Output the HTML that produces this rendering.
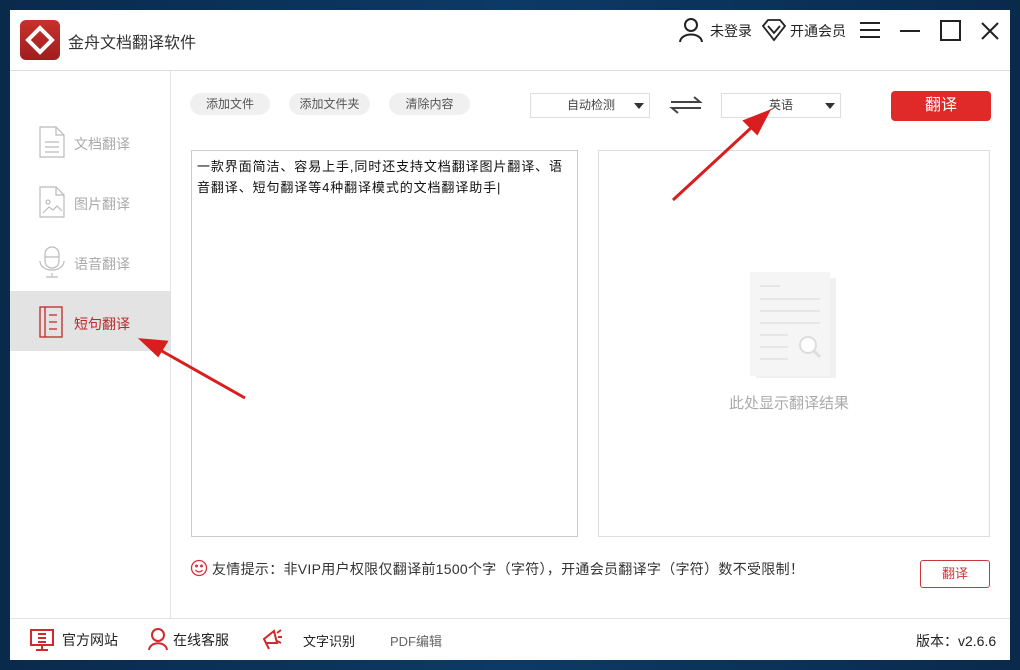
<!DOCTYPE html>
<html><head><meta charset="utf-8"><style>
*{margin:0;padding:0;box-sizing:border-box}
body{width:1020px;height:670px;overflow:hidden;background:linear-gradient(90deg,#0a2a4c,#0c3a66 50%,#0a2a4c);font-family:"Liberation Sans","Noto Sans CJK SC",sans-serif;position:relative}
.win{position:absolute;left:10px;top:10px;width:1000px;height:650px;background:#fff}
.a{position:absolute;white-space:nowrap}
.pill{position:absolute;top:93px;height:22px;background:#f0f0f0;border-radius:11px;font-size:12px;color:#555;text-align:center;line-height:22px}
.dd{position:absolute;top:93px;height:25px;border:1px solid #ddd;font-size:12px;color:#444;line-height:23px}
.dd b{position:absolute;right:5px;top:9px;border-left:5px solid transparent;border-right:5px solid transparent;border-top:6px solid #333}
.nav{position:absolute;left:74px;font-size:14px;color:#aaa}
</style></head><body>
<div class="win"></div>
<div class="a" style="left:20px;top:20px;width:40px;height:40px;background:linear-gradient(#c8312c,#9e1e1e);border-radius:6px"></div>
<svg class="a" style="left:20px;top:20px" width="40" height="40"><g fill="none" stroke="#fff" stroke-width="4"><path d="M20 8 L32 20 L20 32 L8 20 Z"/></g><path d="M15 17 h8 v3 h-6 v3 h8" stroke="#b52525" stroke-width="2.5" fill="none"/></svg>
<div class="a" style="left:68px;top:29px;font-size:16px;color:#333">金舟文档翻译软件</div>
<svg class="a" style="left:678px;top:17px" width="26" height="26" fill="none" stroke="#222" stroke-width="2"><circle cx="13" cy="8" r="6"/><path d="M2 25 C3 15 23 15 24 25"/></svg>
<div class="a" style="left:710px;top:21px;font-size:14px;color:#222">未登录</div>
<svg class="a" style="left:761px;top:18px" width="26" height="24" fill="none" stroke="#222" stroke-width="1.8"><path d="M2 8 L7 2 H19 L24 8 L13 22 Z M7 8 L13 15 L19 8"/></svg>
<div class="a" style="left:790px;top:21px;font-size:14px;color:#222">开通会员</div>
<svg class="a" style="left:858px;top:20px" width="24" height="20" stroke="#222" stroke-width="2"><path d="M2 3h20M2 10h20M2 17h20"/></svg>
<svg class="a" style="left:898px;top:20px" width="24" height="20" stroke="#222" stroke-width="2"><path d="M2 11h20"/></svg>
<svg class="a" style="left:938px;top:19px" width="24" height="24" fill="none" stroke="#222" stroke-width="2"><rect x="3" y="2" width="19" height="19"/></svg>
<svg class="a" style="left:979px;top:20px" width="22" height="22" stroke="#222" stroke-width="2"><path d="M3 3L19 19M19 3L3 19"/></svg>
<div class="a" style="left:10px;top:70px;width:1000px;height:1px;background:#ddd"></div>
<div class="a" style="left:170px;top:71px;width:1px;height:547px;background:#e3e3e3"></div>
<div class="a" style="left:10px;top:291px;width:160px;height:60px;background:#e3e3e3"></div>
<svg class="a" style="left:38px;top:125px" width="28" height="34" fill="none" stroke="#bbb" stroke-width="1.2"><path d="M2 2H18L26 10V32H2Z M18 2V10H26 M7 17h14M7 22h14M7 27h14"/></svg>
<div class="nav" style="top:134px">文档翻译</div>
<svg class="a" style="left:38px;top:185px" width="28" height="34" fill="none" stroke="#bbb" stroke-width="1.2"><path d="M2 2H18L26 10V32H2Z M18 2V10H26 M5 28l6-6 4 3 4-4 5 5"/><circle cx="10" cy="17" r="2"/></svg>
<div class="nav" style="top:194px">图片翻译</div>
<svg class="a" style="left:38px;top:245px" width="28" height="34" fill="none" stroke="#bbb" stroke-width="1.2"><rect x="7" y="2" width="14" height="21" rx="7"/><path d="M7 12h14 M2 16c0 12 24 12 24 0 M14 28v4 M8 32h12"/></svg>
<div class="nav" style="top:254px">语音翻译</div>
<svg class="a" style="left:38px;top:305px" width="28" height="34" fill="none" stroke="#c0282a" stroke-width="1.3"><rect x="2" y="2" width="22" height="30"/><path d="M7 2v30 M11 10h8M11 17h8M11 24h8"/></svg>
<div class="nav" style="top:314px;color:#b52a2a">短句翻译</div>
<div class="pill" style="left:190px;width:80px">添加文件</div>
<div class="pill" style="left:289px;width:81px">添加文件夹</div>
<div class="pill" style="left:389px;width:81px">清除内容</div>
<div class="dd" style="left:530px;width:120px;padding-left:36px">自动检测<b></b></div>
<svg class="a" style="left:669px;top:95px" width="34" height="20" stroke="#444" stroke-width="2" fill="none"><path d="M2 7H31L25 2 M32 13H3L9 18"/></svg>
<div class="dd" style="left:721px;width:120px;padding-left:47px">英语<b></b></div>
<div class="a" style="left:891px;top:91px;width:100px;height:30px;background:#e02a2a;border-radius:4px;color:#fff;font-size:16px;text-align:center;line-height:30px">翻译</div>
<div class="a" style="left:191px;top:150px;width:387px;height:387px;border:1px solid #ccc"></div>
<div class="a" style="left:197px;top:156px;font-size:13px;color:#111;line-height:21px;letter-spacing:0.9px">一款界面简洁、容易上手,同时还支持文档翻译图片翻译、语<br>音翻译、短句翻译等4种翻译模式的文档翻译助手|</div>
<div class="a" style="left:598px;top:150px;width:392px;height:387px;border:1px solid #ddd"></div>
<svg class="a" style="left:750px;top:272px" width="88" height="108"><rect x="6" y="6" width="80" height="100" fill="#f0f0f0"/><rect x="0" y="0" width="80" height="104" fill="#f5f5f5"/><g stroke="#e2e2e2" stroke-width="1.5"><path d="M10 14h20M10 27h60M10 39h60M10 51h60M10 63h28M10 75h28M10 87h28"/></g><circle cx="58" cy="73" r="8" fill="#fff" stroke="#ddd" stroke-width="2"/><path d="M64 79l6 6" stroke="#ddd" stroke-width="3"/></svg>
<div class="a" style="left:729px;top:392px;font-size:15px;color:#aaa">此处显示翻译结果</div>
<svg class="a" style="left:190px;top:559px" width="18" height="18" fill="none" stroke="#d9303a" stroke-width="1.3"><circle cx="9" cy="9" r="7.5"/><circle cx="6.5" cy="7" r=".8" fill="#d9303a"/><circle cx="11.5" cy="7" r=".8" fill="#d9303a"/><path d="M5.5 11c2 2.5 5 2.5 7 0"/></svg>
<div class="a" style="left:212px;top:559px;font-size:14px;color:#333;letter-spacing:0.3px">友情提示：非VIP用户权限仅翻译前1500个字（字符），开通会员翻译字（字符）数不受限制！</div>
<div class="a" style="left:920px;top:560px;width:70px;height:28px;border:1px solid #c8383a;border-radius:3px;color:#c8383a;font-size:13px;text-align:center;line-height:26px">翻译</div>
<div class="a" style="left:10px;top:618px;width:1000px;height:1px;background:#e3e3e3"></div>
<svg class="a" style="left:29px;top:628px" width="26" height="24" fill="none" stroke="#d02a2a" stroke-width="2"><rect x="2" y="2" width="22" height="15"/><path d="M9 6h8M9 10h8M9 14h8M13 17v4M7 22h12"/></svg>
<div class="a" style="left:62px;top:630px;font-size:14px;color:#222">官方网站</div>
<svg class="a" style="left:147px;top:627px" width="22" height="24" fill="none" stroke="#d02a2a" stroke-width="2"><circle cx="11" cy="8" r="6"/><path d="M2 23 C3 14 19 14 20 23"/></svg>
<div class="a" style="left:173px;top:630px;font-size:14px;color:#222">在线客服</div>
<svg class="a" style="left:261px;top:627px" width="22" height="24" fill="none" stroke="#d02a2a" stroke-width="2"><path d="M3 12l10-8 3 12-11 0z M5 16l3 6 M16 6l4-3 M17 10h4 M16 14l4 2"/></svg>
<div class="a" style="left:303px;top:631px;font-size:13px;color:#222">文字识别</div>
<div class="a" style="left:390px;top:631px;font-size:13px;color:#666">PDF编辑</div>
<div class="a" style="left:916px;top:631px;font-size:14px;color:#222">版本：v2.6.6</div>
<svg class="a" style="left:0;top:0" width="1020" height="670"><g stroke="#d81e1e" stroke-width="3" fill="#d81e1e"><path d="M245 398L160 350"/><path d="M142 340L166 342 158 355Z"/><path d="M673 200L752 127"/><path d="M768 112L745 121 757 133Z"/></g></svg>
</body></html>
